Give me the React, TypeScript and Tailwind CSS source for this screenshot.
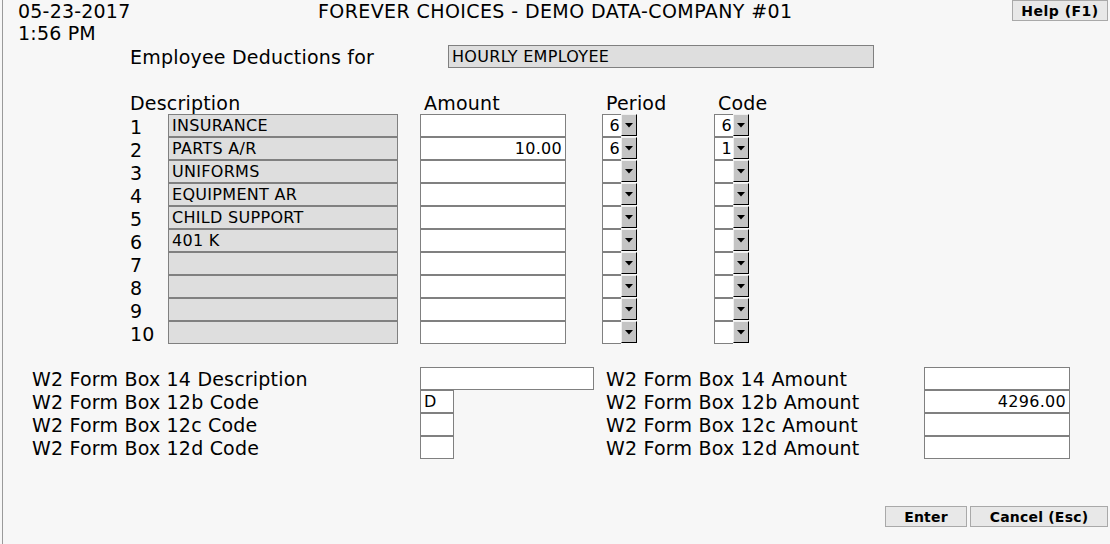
import React from "react";

const font = { fontFamily: '"DejaVu Sans", Verdana, sans-serif' };

const descriptions = [
  "INSURANCE",
  "PARTS A/R",
  "UNIFORMS",
  "EQUIPMENT AR",
  "CHILD SUPPORT",
  "401 K",
  "",
  "",
  "",
  "",
];

const amounts = ["", "10.00", "", "", "", "", "", "", "", ""];
const periods = ["6", "6", "", "", "", "", "", "", "", ""];
const codes = ["6", "1", "", "", "", "", "", "", "", ""];

function Combo({ value }: { value: string }) {
  return (
    <div className="flex h-[23px] w-[35px]">
      <div className="flex h-full w-[19px] items-center justify-end border border-r-0 border-[#808080] bg-white pr-[1px] text-[16px]">
        {value}
      </div>
      <div className="flex h-[22px] w-[16px] items-center justify-center border-t border-l border-b border-r border-t-[#f0f0f0] border-l-[#f0f0f0] border-b-black border-r-black bg-[#c4c4c4]">
        <svg width="8" height="5" viewBox="0 0 8 5">
          <path d="M0 0h8L4 4.5z" fill="#000" />
        </svg>
      </div>
    </div>
  );
}

function Field({
  w,
  value = "",
  gray = false,
  right = false,
}: {
  w: string;
  value?: string;
  gray?: boolean;
  right?: boolean;
}) {
  return (
    <div
      className={`flex h-[23px] items-center border border-[#808080] px-[3px] text-[16px] tracking-[0.3px] ${w} ${
        gray ? "bg-[#dedede]" : "bg-white"
      } ${right ? "justify-end" : ""}`}
    >
      {value}
    </div>
  );
}

export default function App() {
  return (
    <div className="h-[544px] w-[1110px] bg-[#f7f7f7] pl-[2px] text-black" style={font}>
      <div className="h-full border-l border-[#9a9a9a] text-[19px] tracking-[0.2px]">
        {/* top bar */}
        <div className="flex h-[45px] items-start">
          <div className="w-[297px] pl-[15px] leading-[22px]">
            <div>05-23-2017</div>
            <div>1:56 PM</div>
          </div>
          <div className="w-[712px] pl-[18px] leading-[22px] tracking-[0.4px]">
            FOREVER CHOICES - DEMO DATA-COMPANY #01
          </div>
          <button className="h-[21px] w-[96px] border border-[#a9a9a9] bg-[#e8e8e8] text-[14px] font-bold leading-none tracking-[0.5px]">
            Help (F1)
          </button>
        </div>

        {/* employee */}
        <div className="flex h-[23px] items-center">
          <div className="w-[445px] pl-[127px] pt-[1px]">Employee Deductions for</div>
          <Field w="w-[426px]" value="HOURLY EMPLOYEE" gray />
        </div>

        {/* headers */}
        <div className="mt-[23px] flex h-[23px] items-end leading-[22px]">
          <div className="w-[421px] pl-[127px]">Description</div>
          <div className="w-[182px]">Amount</div>
          <div className="w-[112px]">Period</div>
          <div>Code</div>
        </div>

        {/* rows */}
        <div className="flex flex-col">
          {descriptions.map((d, i) => (
            <div key={i} className="flex h-[23px] items-center">
              <div className="w-[165px] pl-[127px] pt-[4px]">{i + 1}</div>
              <Field w="w-[230px]" value={d} gray />
              <div className="w-[22px]" />
              <Field w="w-[146px]" value={amounts[i]} right />
              <div className="w-[36px]" />
              <Combo value={periods[i]} />
              <div className="w-[77px]" />
              <Combo value={codes[i]} />
            </div>
          ))}
        </div>

        {/* W2 section */}
        <div className="mt-[23px] flex">
          <div className="flex flex-col">
            {[
              "W2 Form Box 14 Description",
              "W2 Form Box 12b Code",
              "W2 Form Box 12c Code",
              "W2 Form Box 12d Code",
            ].map((l, i) => (
              <div key={l} className="flex h-[23px] items-center">
                <div className="w-[417px] pl-[29px] pt-[2px]">{l}</div>
                {i === 0 ? (
                  <Field w="w-[174px]" />
                ) : (
                  <Field w="w-[34px]" value={i === 1 ? "D" : ""} />
                )}
              </div>
            ))}
          </div>
          <div className="ml-[12px] flex flex-col">
            {[
              "W2 Form Box 14 Amount",
              "W2 Form Box 12b Amount",
              "W2 Form Box 12c Amount",
              "W2 Form Box 12d Amount",
            ].map((l, i) => (
              <div key={l} className="flex h-[23px] items-center">
                <div className="w-[318px] pt-[2px]">{l}</div>
                <Field w="w-[146px]" value={i === 1 ? "4296.00" : ""} right />
              </div>
            ))}
          </div>
        </div>

        {/* buttons */}
        <div className="mt-[47px] flex justify-end gap-[3px] pr-[2px]">
          <button className="h-[21px] w-[82px] border border-[#a9a9a9] bg-[#e8e8e8] text-[14px] font-bold leading-none tracking-[0.2px]">
            Enter
          </button>
          <button className="h-[21px] w-[138px] border border-[#a9a9a9] bg-[#e8e8e8] text-[14px] font-bold leading-none tracking-[0.2px]">
            Cancel (Esc)
          </button>
        </div>
      </div>
    </div>
  );
}
